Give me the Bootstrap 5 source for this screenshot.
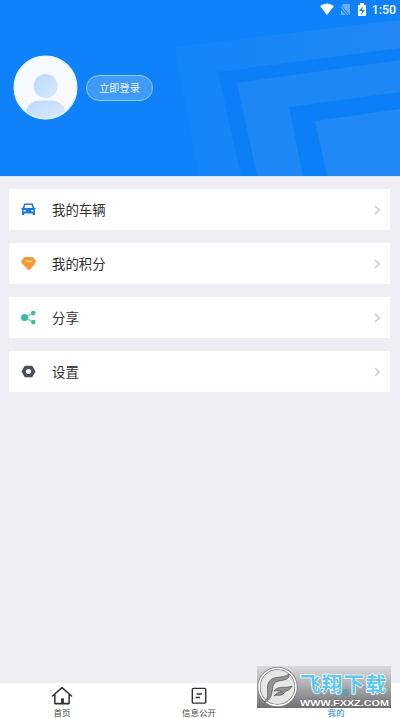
<!DOCTYPE html>
<html lang="zh-CN">
<head>
<meta charset="utf-8">
<meta name="viewport" content="width=device-width, initial-scale=1">
<title>我的</title>
<link href="https://cdn.jsdelivr.net/npm/bootstrap@5.3.0/dist/css/bootstrap.min.css" rel="stylesheet">
<style>
body{font-family:"Noto Sans CJK SC",sans-serif;background:#efeef5;height:718px;overflow:hidden}
.hero{height:177px;background:#0f82f9;border-bottom:1px solid #d3e7fb}
.hero-art{left:0;top:0}
.status{height:20px;padding-right:4px;font:500 12.3px/20px Roboto,sans-serif}
.profile{padding:35px 0 0 13px;gap:8px}
.login{width:67px;height:26px;font-size:10.2px;line-height:1;color:#e9f6ff;background:#409afa;border:1px solid #8fcbff;padding:1px 0 0}
.login:hover{color:#fff;background:#529fff}
.menu{padding:12px 10px 0 9px;gap:13.1px}
.menu-row{height:41px;background:#fff;color:#303030;font-size:13.4px;line-height:20px;padding:0 9px 0 11px}
.menu-row svg{flex:none}
.menu-row span{margin-left:15px;padding-bottom:2px}
.tabs{height:35px;background:#fff;margin-left:-2px}
.tab-item{width:137px;flex:none;color:#484848;font-size:8.5px;line-height:12px;padding-top:2px}
.tab-item.active{color:#188bd0}
.stamp{left:257px;top:666px;width:134px;height:42px}
</style>
<script src="https://cdn.jsdelivr.net/npm/bootstrap@5.3.0/dist/js/bootstrap.bundle.min.js"></script>
</head>
<body class="d-flex flex-column position-relative">
<header class="hero position-relative flex-shrink-0">
  <svg class="hero-art position-absolute" width="400" height="176">
    <defs><linearGradient id="band" x1="0" y1="0" x2="1" y2="0"><stop offset="0" stop-color="#1484f9"/><stop offset="1" stop-color="#2188f4"/></linearGradient></defs>
    <path d="M175 47 400 20V176H199Z" fill="url(#band)"/>
    <path d="M218 72 400 48V176H241Z" fill="#0c7ff6"/>
    <path d="M237 83 400 60V176H257Z" fill="#1e87f6"/>
    <path d="M289 107 400 92V176H303Z" fill="#0c7ff6"/>
    <path d="M315 121 400 109V176H327Z" fill="#2189f6"/>
  </svg>
  <div class="status position-relative d-flex justify-content-end align-items-center text-white">
    <svg width="48" height="20" viewBox="0 0 48 20">
      <path d="M0 6Q7 1 14 6L7 15Z" fill="#fff"/>
      <path d="m23 4h7v11h-3l-6-7v-1zm-2 6v5h5z" fill="#68aff5"/><path d="m20 4 10 12" stroke="#1679e5"/>
      <path d="M38 5h2V3h4v2h2v11h-8z" fill="#fff"/><path d="m43 6-4 5h3l-1 4 4-5h-3z" fill="#267fc9"/>
    </svg><span class="ps-1">1:50</span>
  </div>
  <div class="profile position-relative d-flex align-items-center">
    <svg width="65" height="65" viewBox="0 0 65 65">
      <defs><clipPath id="face"><circle cx="32.500" cy="32.500" r="30.800"/></clipPath>
      <linearGradient id="skin" x1="0" y1="0" x2="1" y2="1"><stop stop-color="#b9d8f8"/><stop offset="1" stop-color="#d8ebff"/></linearGradient>
      <linearGradient id="coat" x1="0" y1="0" x2="1" y2="1"><stop stop-color="#b9d8f8"/><stop offset="1" stop-color="#dcedff"/></linearGradient></defs>
      <circle cx="32.500" cy="32.500" r="31.400" fill="#f7faff" stroke="#e4f6ff" stroke-width="1.200"/>
      <circle cx="32.700" cy="31" r="12" fill="url(#skin)"/>
      <path clip-path="url(#face)" d="M12 65V59Q15 45.500 27 45.500h12Q49 45.500 53 57v8z" fill="url(#coat)"/>
    </svg>
    <button class="btn login rounded-pill">立即登录</button>
  </div>
</header>
<main class="menu d-flex flex-column flex-grow-1">
  <a class="menu-row d-flex align-items-center text-decoration-none" href="#">
    <svg width="17" height="17" viewBox="0 0 17 17"><path fill-rule="evenodd" d="M4.200 2.500h8.600l1.400 4.200h1.300v1.500l-.5.300v5.500h-2.300v-1.500H4.300V14H2V8.500l-.5-.3V6.700h1.300zM5.300 4l-.9 3h8.200l-.9-3zM3.500 9v1.500h2.200V9zm7.800 0v1.500h2.200V9z" fill="#197bdc"/></svg>
    <span>我的车辆</span><svg class="ms-auto" width="8" height="10" viewBox="0 0 8 10" fill="none" stroke="#c6c6c6" stroke-width="1.300"><path d="m2 1 4.300 4L2 9"/></svg>
  </a>
  <a class="menu-row d-flex align-items-center text-decoration-none" href="#">
    <svg width="17" height="17" viewBox="0 0 17 17"><path d="M4.500 2h8.300l3.200 4-1 3-6 6.500L2.500 9 1 6z" fill="#f79a35"/><path d="M5.500 6.300h6.500" stroke="#ffd49b" stroke-width="1.300"/></svg>
    <span>我的积分</span><svg class="ms-auto" width="8" height="10" viewBox="0 0 8 10" fill="none" stroke="#c6c6c6" stroke-width="1.300"><path d="m2 1 4.300 4L2 9"/></svg>
  </a>
  <a class="menu-row d-flex align-items-center text-decoration-none" href="#">
    <svg width="17" height="17" viewBox="0 0 17 17" fill="#42b99e"><path d="M13 4 5 8.500l8 4.500" fill="none" stroke="#63c4af" stroke-width="1.200"/><circle cx="4.500" cy="8.500" r="3.500"/><circle cx="13.300" cy="4" r="2.300"/><circle cx="13.300" cy="13.100" r="2.300"/></svg>
    <span>分享</span><svg class="ms-auto" width="8" height="10" viewBox="0 0 8 10" fill="none" stroke="#c6c6c6" stroke-width="1.300"><path d="m2 1 4.300 4L2 9"/></svg>
  </a>
  <a class="menu-row d-flex align-items-center text-decoration-none" href="#">
    <svg width="17" height="17" viewBox="0 0 17 17"><path d="M5.300 3.500h6.400l2.900 5-2.900 5H5.300l-2.900-5z" fill="#4b4f5b" stroke="#4b4f5b" stroke-width="1.500" stroke-linejoin="round"/><circle cx="8.500" cy="8.500" r="2.600" fill="#fff"/></svg>
    <span>设置</span><svg class="ms-auto" width="8" height="10" viewBox="0 0 8 10" fill="none" stroke="#c6c6c6" stroke-width="1.300"><path d="m2 1 4.300 4L2 9"/></svg>
  </a>
</main>
<nav class="tabs d-flex justify-content-center flex-shrink-0">
  <div class="tab-item d-flex flex-column align-items-center">
    <svg width="24" height="22" viewBox="0 0 24 22" fill="none" stroke="#333" stroke-width="1.600" stroke-linejoin="round" stroke-linecap="round"><path d="M2 11.500 12 2.700l10 8.800M4.500 10v9.500h15V10"/><path d="M12.500 14v5" stroke-width="3" stroke-linecap="butt"/></svg>
    <span>首页</span>
  </div>
  <div class="tab-item d-flex flex-column align-items-center">
    <svg width="24" height="22" viewBox="0 0 24 22" fill="none" stroke="#333" stroke-width="1.500"><rect x="5" y="3.500" width="14" height="15.500" rx="1"/><path d="M9.500 9.500H15M8.500 13h4.500"/></svg>
    <span>信息公开</span>
  </div>
  <div class="tab-item active d-flex flex-column align-items-center">
    <svg width="24" height="22" viewBox="0 0 24 22" fill="#188bd0"><circle cx="12" cy="7" r="4"/><path d="M3 19q2-8 9-8t9 8z"/></svg>
    <span>我的</span>
  </div>
</nav>
<svg class="stamp position-absolute" viewBox="0 0 134 42">
  <defs><linearGradient id="plate" x1="0" y1="0" x2="0" y2="1"><stop stop-color="#dcdcdf"/><stop offset=".5" stop-color="#a9a9ab"/><stop offset="1" stop-color="#707072"/></linearGradient></defs>
  <path d="M0 0h134v42H0z" fill="url(#plate)"/>
  <circle cx="20.500" cy="21" r="18.500" fill="#e6e6e6" stroke="#777" stroke-width="3"/>
  <circle cx="20.500" cy="21" r="18.500" fill="none" stroke="#fff" stroke-width="1.600"/>
  <path d="M7 36C14 32 8 21 12 16 16 9 26 13 32 8c1 6-6 6-10 7-6 1-6 5-7 11-1 6-3 9-8 10z" fill="#929292" stroke="#555" stroke-width=".7"/>
  <path d="M17 25c4-6 11-2 18-5-2 5-6 4-8 7-3 4-7 1-10 3 2-3 5-4 8-4-3-2-5-1-8-1z" fill="#929292" stroke="#555" stroke-width=".7"/>
  <path d="M81 23h11v7H78z" fill="#3d94bb" opacity=".4"/>
  <text x="43" y="26" font-family="Noto Sans CJK SC,sans-serif" font-size="20.500" font-weight="700" fill="#5bc7ed" stroke="#fff" stroke-width="1.400" paint-order="stroke" textLength="86">飞翔下载</text>
  <text x="43" y="39.500" font-family="Liberation Sans,sans-serif" font-size="9.500" font-weight="700" fill="#fff" stroke="#666" stroke-width=".7" paint-order="stroke" textLength="89" lengthAdjust="spacingAndGlyphs">WWW.FXXZ.COM</text>
</svg>
</body>
</html>
